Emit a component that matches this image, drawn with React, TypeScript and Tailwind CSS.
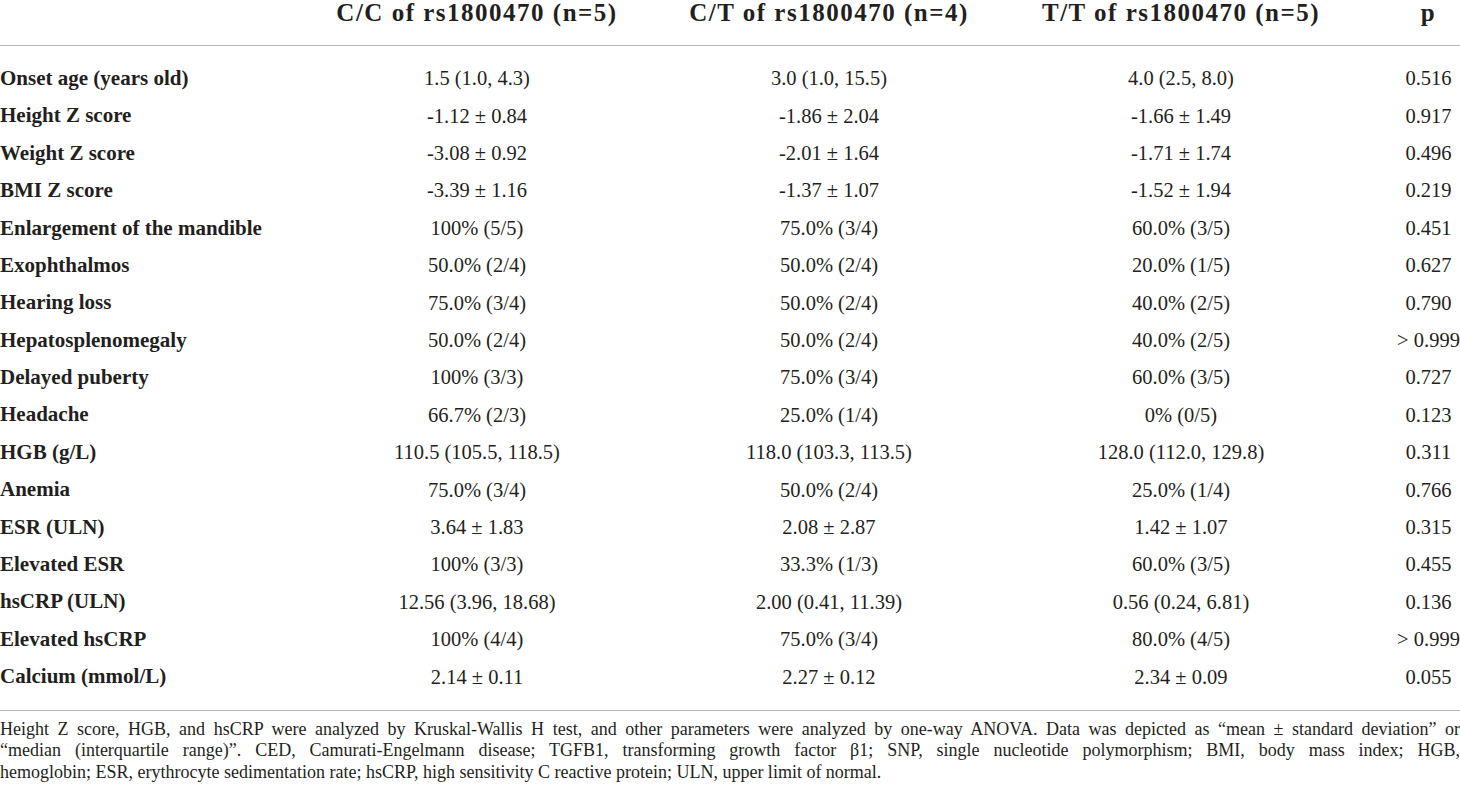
const rows: [string, string, string, string, string][] = [
  ['Onset age (years old)', '1.5 (1.0, 4.3)', '3.0 (1.0, 15.5)', '4.0 (2.5, 8.0)', '0.516'],
  ['Height Z score', '-1.12 ± 0.84', '-1.86 ± 2.04', '-1.66 ± 1.49', '0.917'],
  ['Weight Z score', '-3.08 ± 0.92', '-2.01 ± 1.64', '-1.71 ± 1.74', '0.496'],
  ['BMI Z score', '-3.39 ± 1.16', '-1.37 ± 1.07', '-1.52 ± 1.94', '0.219'],
  ['Enlargement of the mandible', '100% (5/5)', '75.0% (3/4)', '60.0% (3/5)', '0.451'],
  ['Exophthalmos', '50.0% (2/4)', '50.0% (2/4)', '20.0% (1/5)', '0.627'],
  ['Hearing loss', '75.0% (3/4)', '50.0% (2/4)', '40.0% (2/5)', '0.790'],
  ['Hepatosplenomegaly', '50.0% (2/4)', '50.0% (2/4)', '40.0% (2/5)', '> 0.999'],
  ['Delayed puberty', '100% (3/3)', '75.0% (3/4)', '60.0% (3/5)', '0.727'],
  ['Headache', '66.7% (2/3)', '25.0% (1/4)', '0% (0/5)', '0.123'],
  ['HGB (g/L)', '110.5 (105.5, 118.5)', '118.0 (103.3, 113.5)', '128.0 (112.0, 129.8)', '0.311'],
  ['Anemia', '75.0% (3/4)', '50.0% (2/4)', '25.0% (1/4)', '0.766'],
  ['ESR (ULN)', '3.64 ± 1.83', '2.08 ± 2.87', '1.42 ± 1.07', '0.315'],
  ['Elevated ESR', '100% (3/3)', '33.3% (1/3)', '60.0% (3/5)', '0.455'],
  ['hsCRP (ULN)', '12.56 (3.96, 18.68)', '2.00 (0.41, 11.39)', '0.56 (0.24, 6.81)', '0.136'],
  ['Elevated hsCRP', '100% (4/4)', '75.0% (3/4)', '80.0% (4/5)', '> 0.999'],
  ['Calcium (mmol/L)', '2.14 ± 0.11', '2.27 ± 0.12', '2.34 ± 0.09', '0.055'],
]

const grid = 'grid grid-cols-[301px_352px_352px_352px_1fr]'

export default function App() {
  return (
    <div className="w-[1460px] h-[795px] overflow-hidden bg-white text-[#231f20] font-['Liberation_Serif',serif]">
      {/* header */}
      <div className={`${grid} h-[46px] border-b border-[#b5b5b5] text-[25px] font-bold leading-[26px] tracking-[1.5px]`}>
        <div></div>
        <div className="text-center">C/C of rs1800470 (n=5)</div>
        <div className="text-center">C/T of rs1800470 (n=4)</div>
        <div className="text-center">T/T of rs1800470 (n=5)</div>
        <div className="text-center pl-[40px]">p</div>
      </div>

      {/* body */}
      <div className="pt-[14px] pb-[14px] border-b border-[#b5b5b5] text-[20.5px]">
        {rows.map((r) => (
          <div key={r[0]} className={`${grid} h-[37.4px] items-center`}>
            <div className="font-bold text-[21px]">{r[0]}</div>
            <div className="text-center">{r[1]}</div>
            <div className="text-center">{r[2]}</div>
            <div className="text-center">{r[3]}</div>
            <div className="text-center pl-[40px] whitespace-nowrap">{r[4]}</div>
          </div>
        ))}
      </div>

      {/* footnote */}
      <div className="pt-[8px] text-[18px] leading-[21.5px]">
        <p className="text-justify [text-align-last:justify]">
          Height Z score, HGB, and hsCRP were analyzed by Kruskal-Wallis H test, and other parameters were analyzed by one-way ANOVA. Data was depicted as “mean ± standard deviation” or
        </p>
        <p className="text-justify [text-align-last:justify]">
          “median (interquartile range)”. CED, Camurati-Engelmann disease; TGFB1, transforming growth factor β1; SNP, single nucleotide polymorphism; BMI, body mass index; HGB,
        </p>
        <p>hemoglobin; ESR, erythrocyte sedimentation rate; hsCRP, high sensitivity C reactive protein; ULN, upper limit of normal.</p>
      </div>
    </div>
  )
}
